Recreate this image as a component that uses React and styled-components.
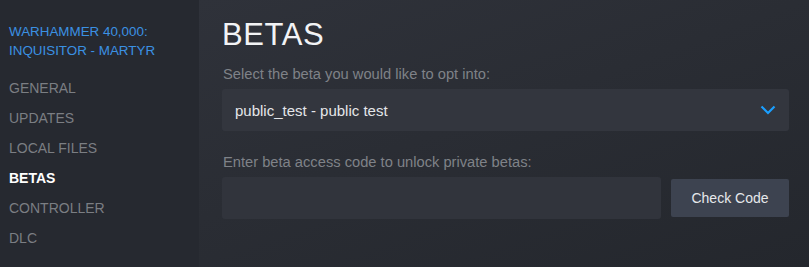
import React from "react";
import styled, { createGlobalStyle } from "styled-components";

const Global = createGlobalStyle`
  html, body { margin: 0; padding: 0; background: #23262d; }
  body { font-family: "Liberation Sans", Arial, sans-serif; }
`;

const Shell = styled.div`
  display: flex;
  width: 809px;
  height: 267px;
  overflow: hidden;
`;

const Sidebar = styled.nav`
  width: 199px;
  flex: none;
  box-sizing: border-box;
  padding: 22px 0 0 9px;
  background: #262930;
`;

const GameTitle = styled.div`
  color: #3b91e3;
  font-size: 13.4px;
  line-height: 19px;
  text-transform: uppercase;
  margin-bottom: 13px;
`;

const NavItem = styled.div`
  font-size: 14px;
  line-height: 30px;
  text-transform: uppercase;
  color: ${(p) => (p.$active ? "#ffffff" : "#7b7e83")};
  font-weight: ${(p) => (p.$active ? 700 : 400)};
`;

const Main = styled.main`
  flex: 1;
  box-sizing: border-box;
  padding: 15px 20px 0 23px;
  background: linear-gradient(160deg, #2f323a 0%, #2a2d34 45%, #24272d 100%);
`;

const Heading = styled.h1`
  margin: 0 0 9px;
  font-size: 31px;
  line-height: 40px;
  font-weight: 300;
  letter-spacing: 0.6px;
  color: #f2f3f5;
`;

const Label = styled.div`
  font-size: 14.7px;
  line-height: 20px;
  color: #7f8288;
  margin: ${(p) => p.$top || 0}px 1px 5px;
`;

const Select = styled.div`
  display: flex;
  align-items: center;
  justify-content: space-between;
  height: 42px;
  box-sizing: border-box;
  padding: 0 13px 0 13px;
  background: #33363e;
  border-radius: 3px;
  color: #e4e6e9;
  font-size: 15px;
`;

const Row = styled.div`
  display: flex;
  align-items: center;
  gap: 10px;
`;

const CodeInput = styled.div`
  flex: 1;
  height: 42px;
  background: #31343c;
  border-radius: 3px;
`;

const Button = styled.button`
  width: 118px;
  height: 38px;
  border: none;
  border-radius: 2px;
  background: #3d4350;
  color: #e6e8eb;
  font-family: inherit;
  font-size: 14px;
  padding: 0;
`;

const Chevron = () => (
  <svg width="16" height="10" viewBox="0 0 16 10">
    <polyline points="1.5,1.5 8,8 14.5,1.5" fill="none" stroke="#1a9fff" strokeWidth="2.2" />
  </svg>
);

export default function App() {
  const items = ["General", "Updates", "Local Files", "Betas", "Controller", "DLC"];
  return (
    <>
      <Global />
      <Shell>
        <Sidebar>
          <GameTitle>
            Warhammer 40,000:
            <br />
            Inquisitor - Martyr
          </GameTitle>
          {items.map((t) => (
            <NavItem key={t} $active={t === "Betas"}>
              {t}
            </NavItem>
          ))}
        </Sidebar>
        <Main>
          <Heading>BETAS</Heading>
          <Label>Select the beta you would like to opt into:</Label>
          <Select>
            <span>public_test - public test</span>
            <Chevron />
          </Select>
          <Label $top={21}>Enter beta access code to unlock private betas:</Label>
          <Row>
            <CodeInput />
            <Button>Check Code</Button>
          </Row>
        </Main>
      </Shell>
    </>
  );
}
